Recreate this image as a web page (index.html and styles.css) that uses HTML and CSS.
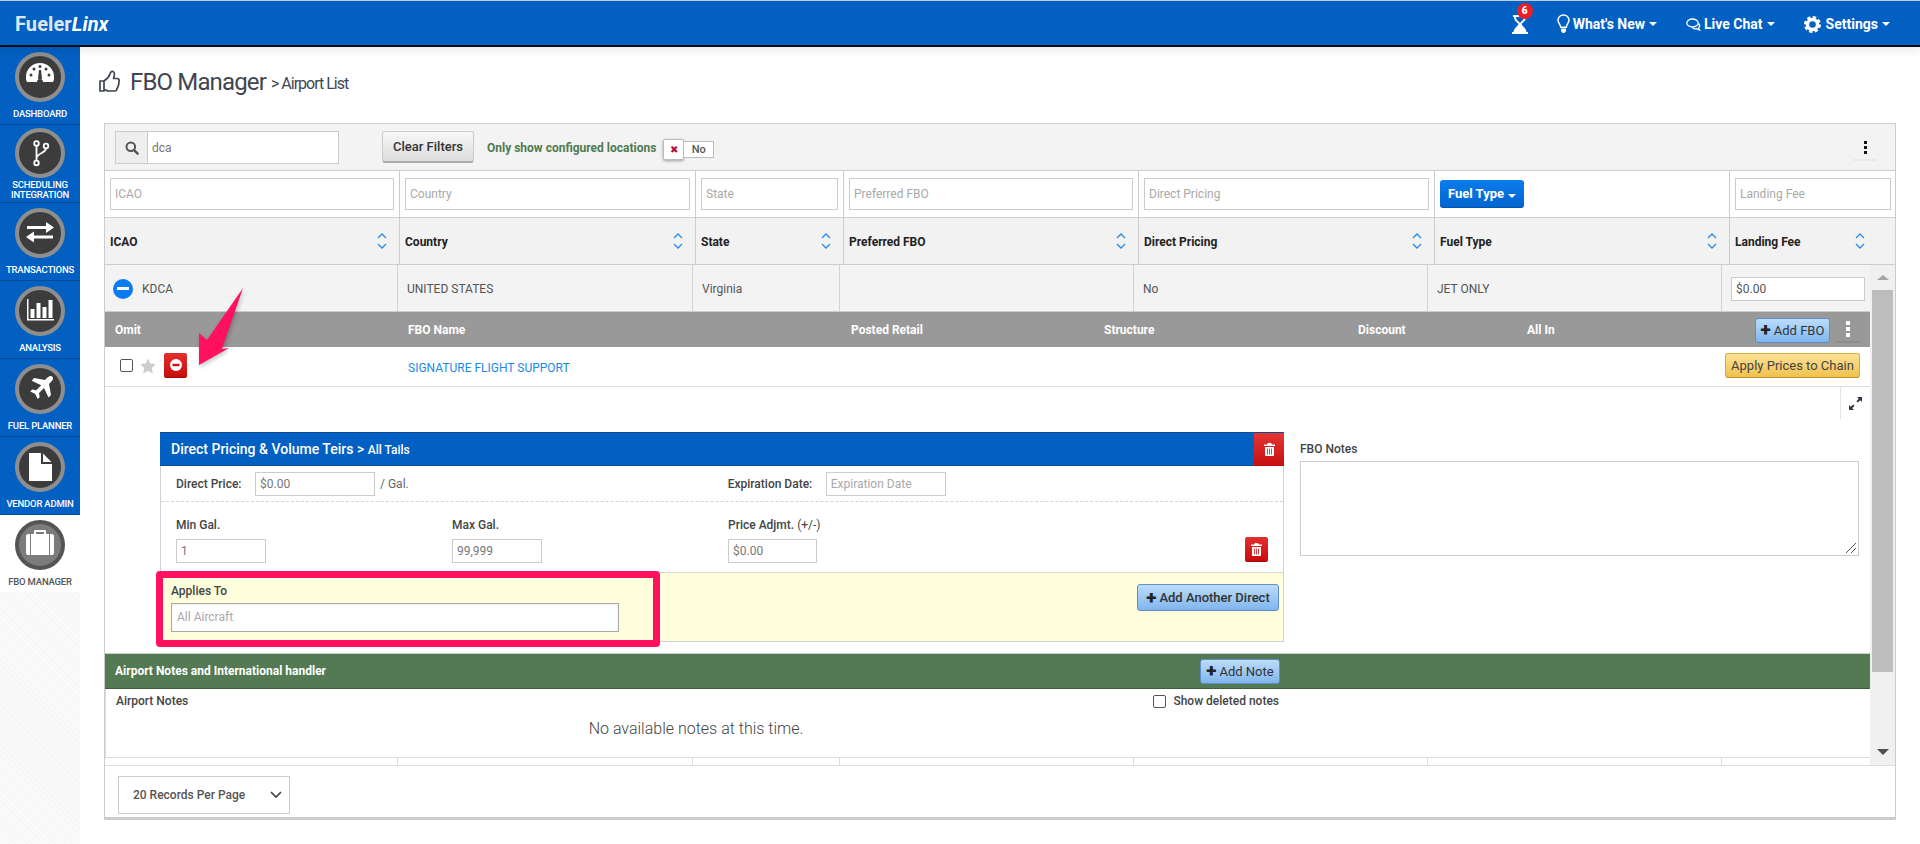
FILE: index.html
```html
<!DOCTYPE html>
<html lang="en">
<head>
<meta charset="utf-8">
<title>FBO Manager</title>
<link rel="stylesheet" href="styles.css">
</head>
<body>
<header class="topbar">
  <div class="logo">Fueler<em>Linx</em></div>
  <div class="topnav">
    <span class="hourglass">
      <svg width="18" height="19" viewBox="0 0 18 19"><path fill="#fff" d="M1 0h14v2h-1c0 4-3 5-4.500 7C10 11 14 13 14.500 17H16v2H0v-2h1.500C2 13 6 11 6.500 9 5 7 2 6 2 2H1z"/><path fill="#0260c3" d="M4 2h8c0 3-2.500 4-4 6C6.500 6 4 5 4 2z"/></svg>
      <b class="badge">6</b>
    </span>
    <a class="tnav tnav-new">
      <svg width="13" height="20" viewBox="0 0 13 20"><path fill="none" stroke="#fff" stroke-width="1.500" d="M6.500 1A5.300 5.300 0 0 0 1 6.300c0 2.700 2.500 4 2.700 7h5.600c.2-3 2.700-4.300 2.700-7A5.300 5.300 0 0 0 6.500 1z"/><path fill="#fff" d="M4 14.500h5v2.500l-1.500 2h-2L4 17z"/></svg>
      What's New<i class="caret"></i>
    </a>
    <a class="tnav tnav-chat">
      <svg width="15" height="13" viewBox="0 0 15 13"><ellipse cx="6.500" cy="5" rx="5.700" ry="4" fill="none" stroke="#fff" stroke-width="1.300"/><path fill="none" stroke="#fff" stroke-width="1.300" d="M12.500 5.500c2 2 1 3.500 0 4.500l1 2-3-1.300c-1.500.3-3 0-4-1"/></svg>
      Live Chat<i class="caret"></i>
    </a>
    <a class="tnav tnav-set">
      <svg width="17" height="17" viewBox="0 0 17 17"><circle cx="8.500" cy="8.500" r="5" fill="none" stroke="#fff" stroke-width="3.400"/><circle cx="8.500" cy="8.500" r="7" fill="none" stroke="#fff" stroke-width="3" stroke-dasharray="3.300 2.200"/></svg>
      Settings<i class="caret"></i>
    </a>
  </div>
</header>

<div class="below">
  <nav class="sidebar">
    <a class="nitem">
      <svg class="nicon" viewBox="0 0 50 50"><circle cx="25" cy="25" r="23" fill="#3c3c3c" stroke="#8e8e8e" stroke-width="4"/><path fill="#fff" d="M12 30c-1-2-1-3-1-5a14 14 0 0 1 28 0c0 2 0 3-1 5H28a3 3 0 0 0-6 0z"/><g fill="#3c3c3c"><circle cx="16" cy="23" r="1.500"/><circle cx="19" cy="17" r="1.500"/><circle cx="31" cy="17" r="1.500"/><circle cx="34" cy="23" r="1.500"/><circle cx="25" cy="14.500" r="1.500"/></g><path fill="#3c3c3c" d="M24 18h2l1 9h-4z"/></svg>
      <span>DASHBOARD</span>
    </a>
    <a class="nitem nitem-two">
      <svg class="nicon" viewBox="0 0 50 50"><circle cx="25" cy="25" r="23" fill="#3c3c3c" stroke="#8e8e8e" stroke-width="4"/><g fill="none" stroke="#fff" stroke-width="1.800"><circle cx="21.500" cy="15.500" r="2.300"/><circle cx="31" cy="18" r="2.300"/><circle cx="21.500" cy="35" r="2.300"/><path d="M21.500 18v14.500M31 20.300c0 5-9.500 5-9.500 10"/></g></svg>
      <span>SCHEDULING INTEGRATION</span>
    </a>
    <a class="nitem">
      <svg class="nicon" viewBox="0 0 50 50"><circle cx="25" cy="25" r="23" fill="#3c3c3c" stroke="#8e8e8e" stroke-width="4"/><path fill="#fff" d="M12 18h19v-4l8 5.500-8 5.500v-4H12zM38 27.500H19v-4L11 29l8 5.500v-4h19z"/></svg>
      <span>TRANSACTIONS</span>
    </a>
    <a class="nitem">
      <svg class="nicon" viewBox="0 0 50 50"><circle cx="25" cy="25" r="23" fill="#3c3c3c" stroke="#8e8e8e" stroke-width="4"/><path fill="#fff" d="M12 13h1.500v20H39v1.500H12zM15.500 23h4v9h-4zM21.500 17h4v15h-4zM27.500 21h4v11h-4zM33.500 14h4v18h-4z"/></svg>
      <span>ANALYSIS</span>
    </a>
    <a class="nitem">
      <svg class="nicon" viewBox="0 0 50 50"><circle cx="25" cy="25" r="23" fill="#3c3c3c" stroke="#8e8e8e" stroke-width="4"/><path fill="#fff" d="M35 12c2-.5 3.500 1 3 3-.3 1.300-1.500 2.500-4 5l2 11-2.500 2.500-4.500-9.500-5 5 .7 4-2 2-2.500-5-5-2.500 2-2 4 .7 5-5-9.500-4.500L19 14l11 2c2.500-2.500 3.700-3.700 5-4z"/></svg>
      <span>FUEL PLANNER</span>
    </a>
    <a class="nitem">
      <svg class="nicon" viewBox="0 0 50 50"><circle cx="25" cy="25" r="23" fill="#3c3c3c" stroke="#8e8e8e" stroke-width="4"/><path fill="#fff" d="M14 11h12v11h11v17H14zM28 11.500 36.500 20H28z"/></svg>
      <span>VENDOR ADMIN</span>
    </a>
    <a class="nitem nitem-active">
      <svg class="nicon" viewBox="0 0 50 50"><circle cx="25" cy="25" r="23" fill="#7c7c7c" stroke="#555" stroke-width="4"/><path fill="#fff" d="M19 14v-2.500c0-1 .5-1.500 1.500-1.500h9c1 0 1.500.5 1.500 1.500V14h-2v-2h-8v2zM13 14h24c1 0 2 1 2 2v17c0 1-1 2-2 2H13c-1 0-2-1-2-2V16c0-1 1-2 2-2z"/><path fill="#7c7c7c" d="M15 14h1v21h-1zM34 14h1v21h-1z"/></svg>
      <span>FBO MANAGER</span>
    </a>
  </nav>

  <main class="main">
    <h1 class="title">
      <svg class="thumb" width="21" height="23" viewBox="0 0 21 23"><path fill="none" stroke="#3f4650" stroke-width="1.700" stroke-linejoin="round" d="M1 11h4v10H1zM5 11c3-2 5-4 6-7 .5-2 1.500-3 3-2.500 2 .7 1.500 4 .5 7H18c1.800 0 2.500 1.500 2 3-.3 1 0 1-.3 2 .3 1-.3 2-.8 2.500.2 1-.4 2-1 2.500.2 1.500-.7 2.500-2 2.500H10c-2 0-3-1-5-1.500"/></svg>
      <span class="title-main">FBO Manager</span>
      <small>&gt; Airport List</small>
    </h1>

    <section class="panel">
      <div class="toolbar">
        <div class="search">
          <span class="search-addon"><svg width="14" height="14" viewBox="0 0 14 14"><circle cx="5.800" cy="5.800" r="4.300" fill="none" stroke="#555" stroke-width="2"/><path stroke="#555" stroke-width="2.400" stroke-linecap="round" d="m9.300 9.300 3.300 3.300"/></svg></span>
          <input class="search-input" value="dca">
        </div>
        <button class="btn btn-grey">Clear Filters</button>
        <span class="only">Only show configured locations</span>
        <span class="toggle"><span class="toggle-handle">✖</span><span class="toggle-no">No</span></span>
        <span class="kebab kebab-dark"><i></i><i></i><i></i></span>
      </div>

      <div class="cols filters">
        <div class="cell"><input class="field" placeholder="ICAO"></div>
        <div class="cell"><input class="field" placeholder="Country"></div>
        <div class="cell"><input class="field" placeholder="State"></div>
        <div class="cell"><input class="field" placeholder="Preferred FBO"></div>
        <div class="cell"><input class="field" placeholder="Direct Pricing"></div>
        <div class="cell"><button class="btn-fuel">Fuel Type<i class="caret"></i></button></div>
        <div class="cell"><input class="field" placeholder="Landing Fee"></div>
      </div>

      <div class="cols heads">
        <div class="cell head">ICAO<svg class="sort" viewBox="0 0 12 18"><path d="m2 6 4-4 4 4M2 12l4 4 4-4"/></svg></div>
        <div class="cell head">Country<svg class="sort" viewBox="0 0 12 18"><path d="m2 6 4-4 4 4M2 12l4 4 4-4"/></svg></div>
        <div class="cell head">State<svg class="sort" viewBox="0 0 12 18"><path d="m2 6 4-4 4 4M2 12l4 4 4-4"/></svg></div>
        <div class="cell head">Preferred FBO<svg class="sort" viewBox="0 0 12 18"><path d="m2 6 4-4 4 4M2 12l4 4 4-4"/></svg></div>
        <div class="cell head">Direct Pricing<svg class="sort" viewBox="0 0 12 18"><path d="m2 6 4-4 4 4M2 12l4 4 4-4"/></svg></div>
        <div class="cell head">Fuel Type<svg class="sort" viewBox="0 0 12 18"><path d="m2 6 4-4 4 4M2 12l4 4 4-4"/></svg></div>
        <div class="cell head head-last">Landing Fee<svg class="sort" viewBox="0 0 12 18"><path d="m2 6 4-4 4 4M2 12l4 4 4-4"/></svg></div>
      </div>

      <div class="scroller">
        <div class="content">
          <div class="rowcols airport">
            <div class="rc rc-first"><span class="minus"></span>KDCA</div>
            <div class="rc">UNITED STATES</div>
            <div class="rc">Virginia</div>
            <div class="rc"></div>
            <div class="rc">No</div>
            <div class="rc">JET ONLY</div>
            <div class="rc rc-last"><input class="field field-fee" value="$0.00"></div>
          </div>

          <div class="subhead">
            <span>Omit</span>
            <span>FBO Name</span>
            <span>Posted Retail</span>
            <span>Structure</span>
            <span>Discount</span>
            <span>All In</span>
            <div class="subhead-actions">
              <button class="btn-blue btn-addfbo"><b class="plus">+</b>Add FBO</button>
              <span class="kebab kebab-light"><i></i><i></i><i></i></span>
            </div>
          </div>

          <div class="fbo">
            <div class="fbo-tools">
              <span class="check"></span>
              <svg class="star" width="16" height="16" viewBox="0 0 16 16"><path fill="#ccc" d="m8 .5 2.300 5 5.500.7-4 3.800 1 5.400L8 12.800 3.200 15.400l1-5.400-4-3.800 5.500-.7z"/></svg>
              <span class="btn-red"><svg width="12" height="12" viewBox="0 0 12 12"><circle cx="6" cy="6" r="6" fill="#fff"/><rect x="2.500" y="4.800" width="7" height="2.400" fill="#d01010"/></svg></span>
            </div>
            <a class="fbo-name">SIGNATURE FLIGHT SUPPORT</a>
            <button class="btn-apply">Apply Prices to Chain</button>
          </div>

          <div class="detail">
            <span class="expand"><svg width="13" height="13" viewBox="0 0 13 13"><path fill="#2b3a4a" d="M8 0h5v5l-1.800-1.800-2.400 2.400-1.400-1.400 2.400-2.400zM5 13H0V8l1.800 1.800 2.400-2.400 1.400 1.400-2.400 2.400z"/></svg></span>
            <div class="card">
              <div class="card-head">
                <span class="card-title">Direct Pricing &amp; Volume Teirs &gt; <small>All Tails</small></span>
                <span class="card-del"><svg class="trash" width="11" height="13" viewBox="0 0 11 13"><use href="#trash"/></svg></span>
              </div>
              <div class="price-row">
                <label class="lbl lbl-price">Direct Price:</label>
                <input class="field field-price" value="$0.00">
                <span class="gal">/ Gal.</span>
                <label class="lbl lbl-exp">Expiration Date:</label>
                <input class="field field-exp" placeholder="Expiration Date">
              </div>
              <div class="tier-row">
                <div class="tier tier-min"><label class="lbl">Min Gal.</label><input class="field field-tier" value="1"></div>
                <div class="tier tier-max"><label class="lbl">Max Gal.</label><input class="field field-tier" value="99,999"></div>
                <div class="tier"><label class="lbl">Price Adjmt. <span class="thin">(+/-)</span></label><input class="field field-tier field-adj" value="$0.00"></div>
                <span class="btn-red btn-red-tier"><svg width="11" height="13" viewBox="0 0 11 13"><use href="#trash"/></svg></span>
              </div>
              <div class="applies">
                <div class="applies-left">
                  <label class="lbl">Applies To</label>
                  <input class="field field-applies" placeholder="All Aircraft">
                </div>
                <button class="btn-blue btn-another"><b class="plus">+</b>Add Another Direct</button>
                <span class="highlight"></span>
              </div>
            </div>
            <div class="notes">
              <label class="lbl">FBO Notes</label>
              <div class="notes-box">
                <svg class="grip" width="12" height="12" viewBox="0 0 12 12"><path stroke="#555" stroke-width="1" d="M1 11 11 1M6 11l5-5"/></svg>
              </div>
            </div>
          </div>

          <div class="greenbar">
            <span class="greenbar-title">Airport Notes and International handler</span>
            <button class="btn-blue btn-addnote"><b class="plus">+</b>Add Note</button>
          </div>
          <div class="airport-notes">
            <div class="an-head">
              <label class="lbl">Airport Notes</label>
              <span class="deleted"><span class="check"></span><label class="lbl">Show deleted notes</label></span>
            </div>
            <p class="empty">No available notes at this time.</p>
          </div>
          <div class="rowcols stub">
            <div class="rc"></div><div class="rc"></div><div class="rc"></div><div class="rc"></div><div class="rc"></div><div class="rc"></div><div class="rc rc-last"></div>
          </div>
        </div>
        <div class="scrollbar">
          <i class="arrow arrow-up"></i>
          <span class="thumbbar"></span>
          <i class="arrow arrow-down"></i>
        </div>
      </div>

      <div class="foot">
        <div class="perpage">20 Records Per Page<svg width="12" height="8" viewBox="0 0 12 8"><path fill="none" stroke="#444" stroke-width="1.700" d="m1 1 5 5 5-5"/></svg></div>
      </div>
    </section>
  </main>
</div>

<svg class="callout" width="60" height="90" viewBox="0 0 60 90"><path fill="#ff1160" d="M57 0 36 61l7-1-30 17V45l8 7z"/></svg>

<svg class="defs" width="0" height="0"><defs><g id="trash"><path fill="#fff" d="M4 0h3l1 1.500h3V3H0V1.500h3zM1 4h9v8c0 .6-.4 1-1 1H2c-.6 0-1-.4-1-1z"/><path stroke="#d01010" stroke-width=".8" d="M3.500 5.500v6M5.500 5.500v6M7.500 5.500v6"/></g></defs></svg>
</body>
</html>
```
FILE: styles.css
```css
* { box-sizing: border-box; }
html, body { margin: 0; height: 844px; overflow: hidden; background: #fff; }
body { font-family: Roboto, "Liberation Sans", sans-serif; font-size: 12px; color: #444; position: relative; }
button { font-family: inherit; cursor: pointer; }
input { font-family: inherit; }
.defs { position: absolute; }

/* top bar */
.topbar { height: 47px; display: flex; align-items: center; padding-top: 2px; background: #0260c3; border-top: 1px solid #b9cfe6; border-bottom: 2px solid #0b0b12; color: #fff; position: relative; z-index: 2; box-shadow: 0 3px 10px rgba(0,0,0,.1); }
.logo { margin-left: 15px; font-size: 20px; font-weight: 700; color: #dfe6ef; letter-spacing: .1px; }
.logo em { color: #fff; font-style: italic; }
.topnav { margin-left: auto; display: flex; align-items: center; font-size: 14px; font-weight: 700; color: #fff; }
.hourglass { position: relative; display: flex; margin-right: 27px; }
.badge { position: absolute; left: 5px; top: -12px; width: 16px; height: 16px; border-radius: 50%; background: #e8202a; color: #fff; font-size: 10px; line-height: 16px; text-align: center; }
.tnav { display: flex; align-items: center; }
.tnav svg { margin-right: 3px; }
.tnav-new { margin-right: 29px; }
.tnav-chat { margin-right: 29px; }
.tnav-set { margin-right: 30px; }
.tnav-set svg { margin-right: 5px; }
.caret { display: inline-block; width: 0; height: 0; margin-left: 4px; border-left: 4px solid transparent; border-right: 4px solid transparent; border-top: 4px solid #fff; }

/* sidebar */
.below { display: flex; height: 797px; }
.sidebar { width: 80px; flex: none; background: repeating-linear-gradient(45deg, #fbfbfb 0 2px, #f7f7f7 2px 4px); }
.nitem { display: flex; flex-direction: column; align-items: center; height: 78px; padding-top: 5px; background: #0260c3; border-bottom: 1px solid #034a92; color: #fff; font-size: 9.500px; font-weight: 500; text-align: center; line-height: 10px; letter-spacing: -.2px; }
.nitem span { margin-top: 7px; }
.nicon { width: 50px; height: 50px; flex: none; }
.nitem-two { padding-top: 3px; }
.nitem-two span { margin-top: 2px; width: 70px; }
.nitem-active { background: #fff; border-bottom: 0; color: #555; height: 77px; }

/* main */
.main { flex: 1; min-width: 0; padding: 0 24px; }
.title { display: flex; align-items: center; height: 76px; margin: 0; padding-bottom: 7px; font-weight: 400; color: #3f4650; }
.thumb { margin: 0 10px 0 -5px; }
.title-main { font-size: 24px; letter-spacing: -.85px; }
.title small { font-size: 16px; margin-left: 5px; padding-top: 3px; letter-spacing: -1px; color: #3f4650; }
.panel { width: 1792px; height: 697px; display: flex; flex-direction: column; border: 1px solid #ccc; border-bottom-width: 3px; }

/* toolbar */
.toolbar { height: 47px; flex: none; display: flex; align-items: center; padding: 1px 18px 0 10px; background: #f3f3f3; border-bottom: 1px solid #ccc; }
.search { display: flex; width: 224px; height: 33px; border: 1px solid #ccc; }
.search-addon { width: 32px; display: flex; align-items: center; justify-content: center; background: #eee; border-right: 1px solid #ccc; }
.search-input { flex: 1; min-width: 0; border: 0; padding: 0 4px; font-size: 12px; color: #777; outline: 0; }
.btn { height: 32px; }
.btn-grey { width: 92px; margin: 0 0 1px 43px; padding: 0; font-size: 13px; font-weight: 500; color: #333; border: 1px solid #ccc; border-bottom: 2px solid #aaa; border-radius: 3px; background: linear-gradient(#f8f8f8, #dcdcdc); }
.only { margin-left: 13px; font-weight: 700; color: #4f7a4f; white-space: nowrap; }
.toggle { display: flex; align-items: center; margin: 3px 0 0 7px; }
.toggle-handle { width: 21px; height: 21px; display: flex; align-items: center; justify-content: center; background: #fff; border: 1px solid #bbb; border-radius: 2px; box-shadow: 0 1px 3px rgba(0,0,0,.35); color: #b0123a; font-size: 10px; }
.toggle-no { width: 30px; height: 17px; display: flex; align-items: center; justify-content: center; background: #fff; border: 1px solid #bbb; border-left: 0; font-size: 11px; font-weight: 500; color: #555; }
.kebab { display: flex; flex-direction: column; align-items: center; gap: 2px; }
.kebab i { width: 3px; height: 3px; }
.kebab-dark { margin-left: auto; width: 24px; height: 26px; padding-top: 6px; border-bottom: 2px solid #e9e9e9; }
.kebab-dark i { background: #111; }
.kebab-light { width: 24px; height: 27px; padding-top: 5px; margin-left: 6px; border-bottom: 2px solid #8c8c8c; }
.kebab-light i { width: 4px; height: 4px; background: #fff; }

/* shared column grid */
.cols { flex: none; display: grid; grid-template-columns: 295px 296px 148px 295px 296px 295px 1fr; border-bottom: 1px solid #ccc; }
.cell { display: flex; align-items: center; padding: 0 5px; border-right: 1px solid #ccc; min-width: 0; }
.cell:last-child { border-right: 0; padding-right: 4px; }
.filters { height: 47px; }
.filters .cell { padding-bottom: 1px; }
.heads { height: 47px; background: #f2f2f2; }
.head { justify-content: space-between; font-weight: 700; color: #222; padding-top: 2px; padding-right: 11px; }
.cell.head-last { padding-right: 29px; }
.sort { width: 12px; height: 18px; margin-top: -2px; }
.sort path { fill: none; stroke: #2a8ae8; stroke-width: 1.300; }
.field { height: 32px; width: 100%; padding: 0 4px; border: 1px solid #ccc; background: #fff; font-size: 12px; color: #666; outline: 0; border-radius: 0; }
.field::placeholder { color: #a9a9a9; opacity: 1; }
.btn-fuel { width: 84px; height: 28px; padding: 0; border: 0; border-bottom: 1px solid #0255ad; border-radius: 3px; background: linear-gradient(#0b7cec, #0265cf); color: #fff; font-size: 13px; font-weight: 700; }

/* scroller */
.scroller { flex: 1; min-height: 0; display: flex; }
.content { width: 1765px; flex: none; min-width: 0; }
.rowcols { display: grid; grid-template-columns: 293px 295px 147px 294px 294px 294px 1fr; }
.rc { display: flex; align-items: center; padding-left: 9px; border-right: 1px solid #d2d2d2; color: #555; min-width: 0; }
.rc-last { border-right: 0; }
.airport { height: 47px; background: #f3f3f3; border-bottom: 1px solid #ccc; }
.airport .rc { padding-top: 1px; }
.rc-first { padding-left: 8px; }
.minus { width: 20px; height: 20px; margin-right: 9px; border-radius: 50%; background: #0a7cf2 linear-gradient(#fff, #fff) center / 12px 3px no-repeat; }
.field-fee { width: 134px; height: 24px; color: #555; }
.subhead { height: 35px; display: grid; grid-template-columns: 293px 443px 253px 254px 169px 238px 1fr; align-items: center; background: #999; color: #fff; font-weight: 700; }
.subhead span { padding-left: 10px; }
.subhead span.kebab { padding-left: 0; }
.subhead-actions { display: flex; align-items: center; }
.btn-blue { display: inline-flex; align-items: center; justify-content: center; padding: 0; border: 1px solid #5e8fc8; border-radius: 3px; background: linear-gradient(#bcdcfa, #80b6ee); color: #333; font-size: 13px; }
.plus { font-size: 19px; line-height: 14px; font-weight: 900; margin-right: 3px; color: #222; }
.btn-addfbo { width: 75px; height: 25px; margin-top: 1px; }
.fbo { height: 40px; display: flex; align-items: center; border-bottom: 1px solid #ddd; }
.fbo-tools { display: flex; align-items: center; width: 293px; padding: 0 0 2px 15px; }
.check { display: inline-block; width: 13px; height: 13px; border: 1px solid #555; border-radius: 2px; background: #fff; flex: none; }
.star { margin-left: 7px; }
.btn-red { width: 23px; height: 25px; display: flex; align-items: center; justify-content: center; border-radius: 2px; background: linear-gradient(#e42f2f, #c80c0c); border-bottom: 1px solid #a50a0a; }
.fbo-tools .btn-red { margin-left: 8px; }
.fbo-name { margin: 2px 0 0 10px; color: #1e88e5; }
.btn-apply { width: 135px; height: 25px; margin: 0 10px 2px auto; padding: 0; border: 1px solid #d8ab3e; border-bottom-color: #c0922a; border-radius: 3px; background: linear-gradient(#fde296, #f0c14e); color: #444; font-size: 13px; }

/* detail */
.detail { position: relative; height: 266px; display: flex; align-items: flex-start; padding: 45px 0 0 55px; }
.expand { position: absolute; right: 0; top: 0; width: 30px; height: 32px; display: flex; align-items: center; justify-content: center; border-left: 1px solid #e4e4e4; }
.card { width: 1124px; height: 210px; display: flex; flex-direction: column; border: 1px solid #d2d2d2; border-top: 0; }
.card-head { height: 34px; flex: none; margin: 0 -1px; display: flex; align-items: center; justify-content: space-between; background: #0260c3; border-top: 1px solid #0b4c94; border-bottom: 1px solid #0b4c94; color: #fff; padding-left: 11px; }
.card-title { font-size: 14px; font-weight: 500; }
.card-title small { font-size: 12px; }
.card-del { width: 30px; height: 33px; display: flex; align-items: center; justify-content: center; background: linear-gradient(#e53636, #c60f0f); }
.price-row { height: 36px; flex: none; display: flex; align-items: center; padding-left: 15px; border-bottom: 1px dashed #d5d5d5; }
.lbl { font-weight: 500; color: #444; }
.thin { font-weight: 400; }
.lbl-price { width: 79px; }
.field-price { width: 120px; height: 24px; color: #777; }
.gal { margin-left: 5px; color: #666; }
.lbl-exp { margin-left: 319px; width: 98px; }
.field-exp { width: 120px; height: 24px; }
.tier-row { flex: 1; display: flex; padding: 16px 0 0 15px; align-items: flex-start; position: relative; border-bottom: 1px solid #d5d5d5; }
.tier { display: flex; flex-direction: column; gap: 7px; }
.tier-min { width: 276px; }
.tier-max { width: 276px; }
.field-tier { width: 90px; height: 24px; color: #777; }
.field-adj { width: 89px; }
.btn-red-tier { margin: 19px 15px 0 auto; }
.applies { height: 68px; flex: none; position: relative; display: flex; justify-content: space-between; background: #fefedd; padding: 11px 4px 0 10px; }
.applies-left { display: flex; flex-direction: column; gap: 5px; }
.field-applies { width: 448px; height: 29px; padding: 0 5px 1px; border-color: #aaa; box-shadow: inset 0 1px 3px rgba(0,0,0,.08); }
.btn-another { width: 142px; height: 27px; font-weight: 500; }
.highlight { position: absolute; left: -5px; top: -2px; width: 504px; height: 76px; border: 7px solid #ff1160; border-radius: 4px; pointer-events: none; }
.notes { margin-left: 16px; padding-top: 10px; }
.notes .lbl { display: block; line-height: 14px; }
.notes-box { position: relative; width: 559px; height: 95px; margin-top: 5px; border: 1px solid #ccc; }
.grip { position: absolute; right: 1px; bottom: 1px; }

/* green bar */
.greenbar { height: 36px; display: flex; align-items: center; justify-content: space-between; width: 100%; padding: 0 0 0 10px; background: #537a53; border-top: 1px solid #c9d2c9; border-bottom: 1px solid #3f5f3f; color: #fff; }
.greenbar-title { font-weight: 700; }
.btn-addnote { width: 80px; height: 25px; margin-right: 590px; }
.airport-notes { height: 69px; border-left: 1px solid #ddd; border-bottom: 1px solid #ddd; position: relative; }
.an-head { display: flex; justify-content: space-between; padding: 5px 590px 0 10px; line-height: 14px; }
.deleted { display: flex; align-items: center; gap: 7px; margin-right: 1px; }
.empty { margin: 11px 0 0; padding-right: 584px; text-align: center; font-size: 16px; font-weight: 300; color: #444; line-height: 20px; }
.stub { height: 8px; border-bottom: 1px solid #ddd; }
.stub .rc { border-right-color: #ddd; }

/* scrollbar */
.scrollbar { flex: 1; display: flex; flex-direction: column; align-items: center; background: #f0f0f0; border-bottom: 1px solid #ddd; position: relative; }
.thumbbar { width: 21px; height: 382px; margin-top: 10px; background: #bdbdbd; }
.arrow { width: 0; height: 0; border-left: 6px solid transparent; border-right: 6px solid transparent; }
.arrow-up { margin-top: 10px; border-bottom: 5px solid #a5a5a5; }
.arrow-down { margin-top: 77px; border-top: 6px solid #505050; }

/* footer */
.foot { height: 51px; flex: none; padding: 10px 0 0 13px; }
.perpage { display: flex; align-items: center; justify-content: space-between; width: 172px; height: 38px; padding: 0 7px 0 14px; border: 1px solid #ccc; color: #555; font-weight: 500; }

/* annotation arrow */
.callout { position: absolute; left: 186px; top: 288px; filter: drop-shadow(1px 2px 2px rgba(0,0,0,.25)); }
```
